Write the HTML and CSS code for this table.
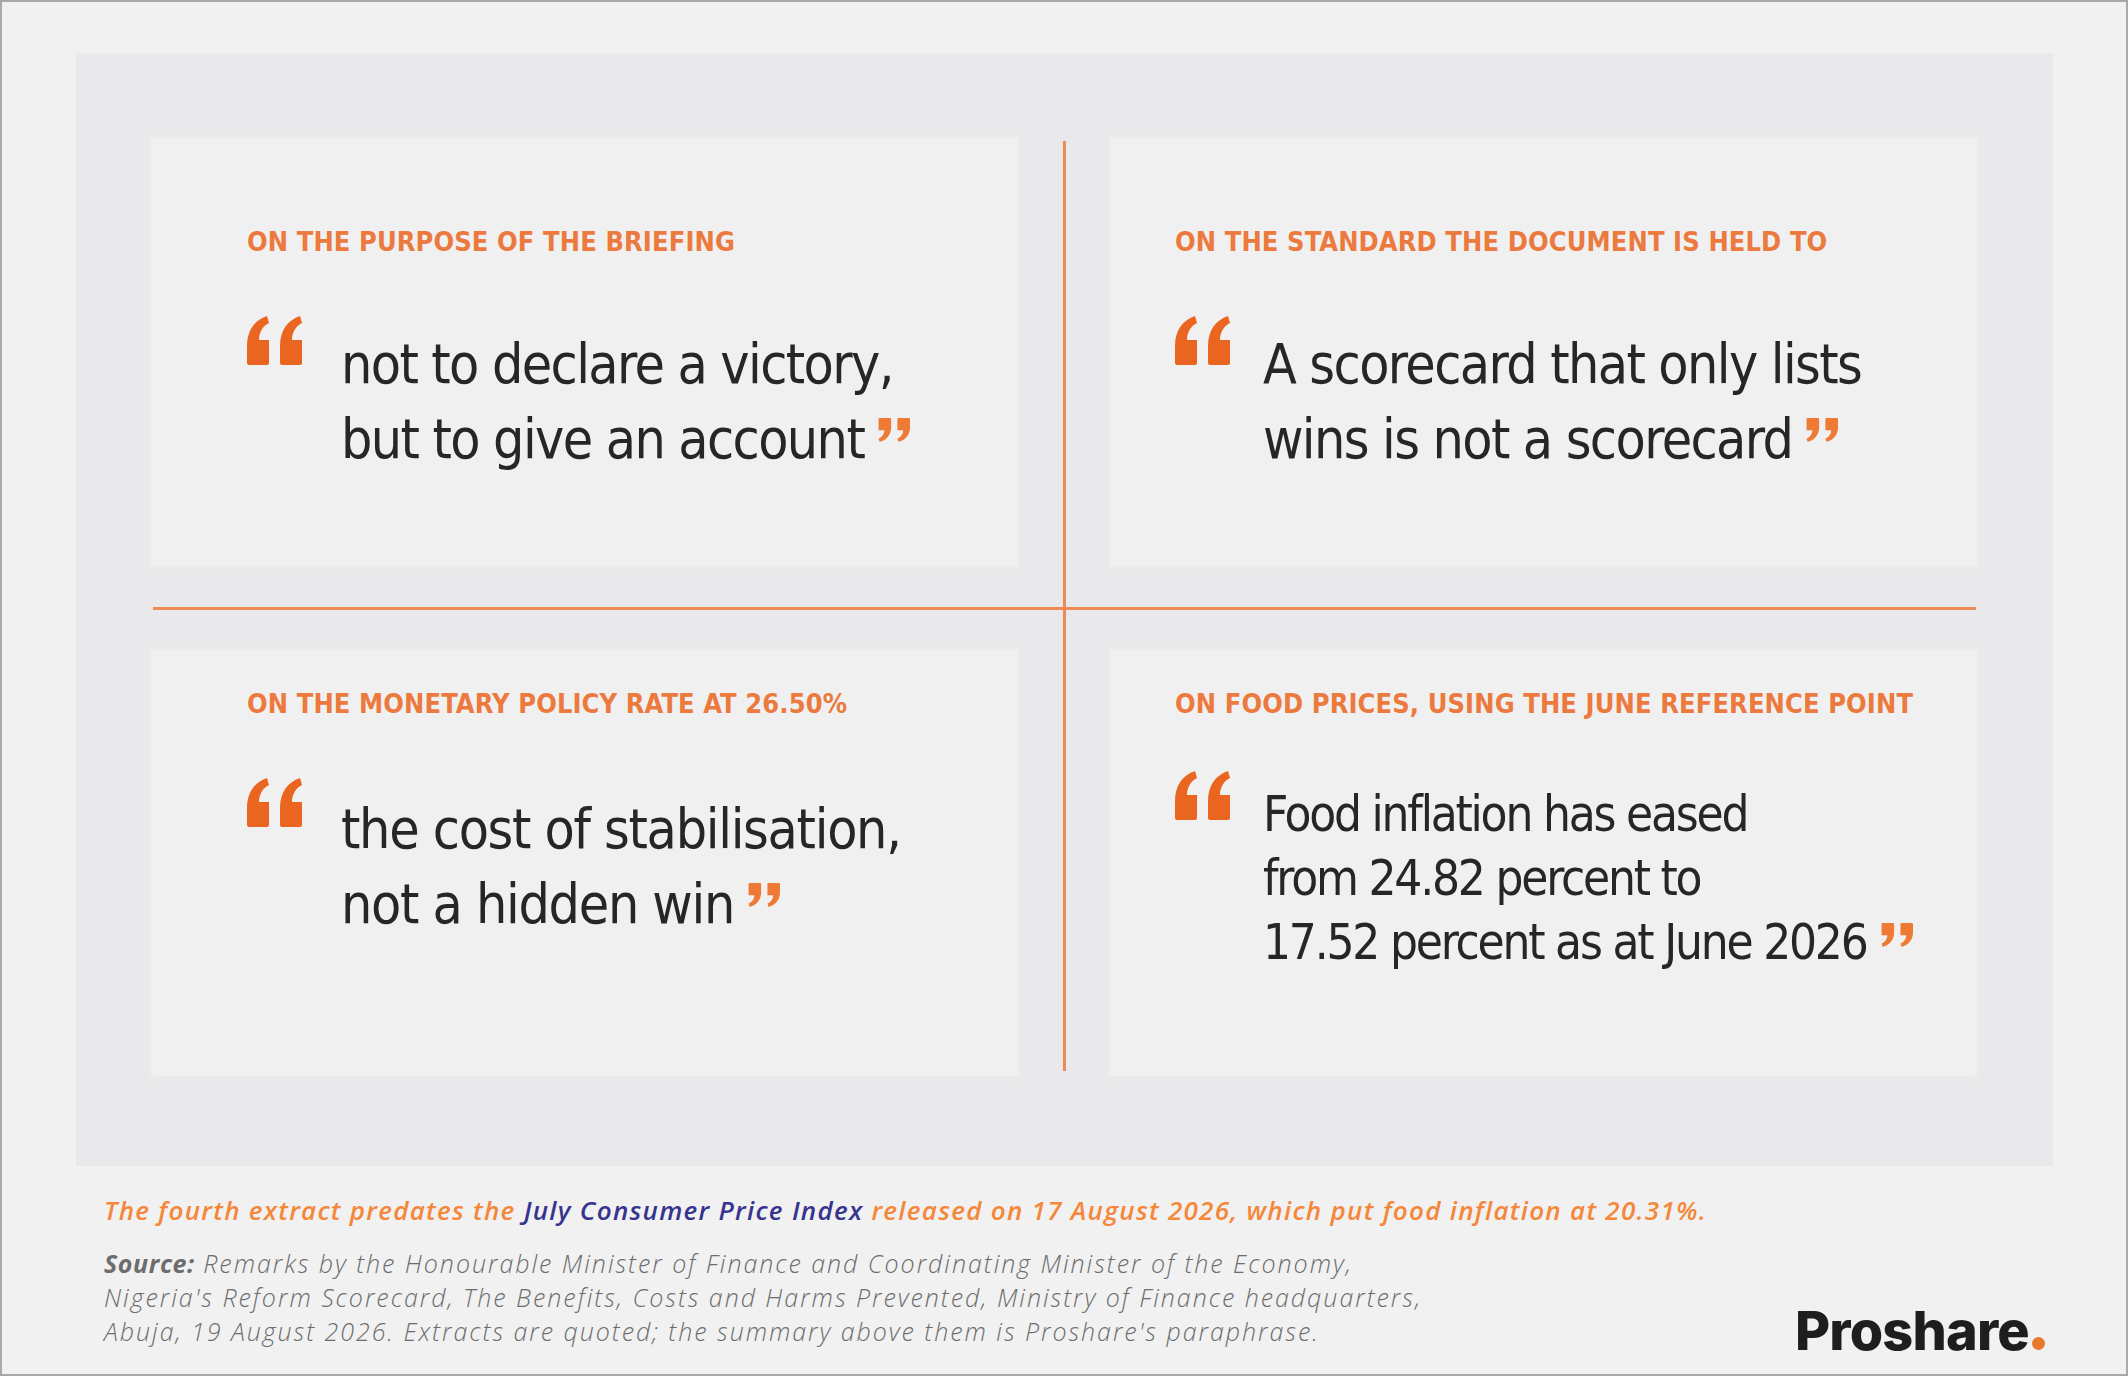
FILE: index.html
```html
<!DOCTYPE html>
<html lang="en">
<head>
<meta charset="utf-8">
<title>Proshare – Reform Scorecard extracts</title>
<link rel="stylesheet" href="styles.css">
</head>
<body>
<div class="frame">
  <section class="panel">
    <div class="grid">
      <article class="card card-tl col-left">
        <p class="label">ON THE PURPOSE OF THE BRIEFING</p>
        <div class="quote">
          <svg class="q-open" viewBox="0 0 56 49" aria-hidden="true"><path d="M2,49 L20,49 Q22,49 22,47 L22,24 L12,24 C12,16 16,10 22,7 L20,0 C8,4 0,14 0,30 L0,47 Q0,49 2,49 Z"/><path d="M35,49 L53,49 Q55,49 55,47 L55,24 L45,24 C45,16 49,10 55,7 L53,0 C41,4 33,14 33,30 L33,47 Q33,49 35,49 Z"/></svg>
          <p class="q-text">not to declare a victory,<br>but to give an account<svg class="q-close" viewBox="0 0 56 49" preserveAspectRatio="none" aria-hidden="true"><g transform="rotate(180 28 24.5)"><path d="M2,49 L20,49 Q22,49 22,47 L22,24 L12,24 C12,16 16,10 22,7 L20,0 C8,4 0,14 0,30 L0,47 Q0,49 2,49 Z"/><path d="M35,49 L53,49 Q55,49 55,47 L55,24 L45,24 C45,16 49,10 55,7 L53,0 C41,4 33,14 33,30 L33,47 Q33,49 35,49 Z"/></g></svg></p>
        </div>
      </article>
      <div class="rule-v"></div>
      <article class="card card-tr col-right">
        <p class="label">ON THE STANDARD THE DOCUMENT IS HELD TO</p>
        <div class="quote">
          <svg class="q-open" viewBox="0 0 56 49" aria-hidden="true"><path d="M2,49 L20,49 Q22,49 22,47 L22,24 L12,24 C12,16 16,10 22,7 L20,0 C8,4 0,14 0,30 L0,47 Q0,49 2,49 Z"/><path d="M35,49 L53,49 Q55,49 55,47 L55,24 L45,24 C45,16 49,10 55,7 L53,0 C41,4 33,14 33,30 L33,47 Q33,49 35,49 Z"/></svg>
          <p class="q-text">A scorecard that only lists<br>wins is not a scorecard<svg class="q-close" viewBox="0 0 56 49" preserveAspectRatio="none" aria-hidden="true"><g transform="rotate(180 28 24.5)"><path d="M2,49 L20,49 Q22,49 22,47 L22,24 L12,24 C12,16 16,10 22,7 L20,0 C8,4 0,14 0,30 L0,47 Q0,49 2,49 Z"/><path d="M35,49 L53,49 Q55,49 55,47 L55,24 L45,24 C45,16 49,10 55,7 L53,0 C41,4 33,14 33,30 L33,47 Q33,49 35,49 Z"/></g></svg></p>
        </div>
      </article>
      <div class="rule-h"></div>
      <article class="card card-bl col-left">
        <p class="label">ON THE MONETARY POLICY RATE AT 26.50%</p>
        <div class="quote">
          <svg class="q-open" viewBox="0 0 56 49" aria-hidden="true"><path d="M2,49 L20,49 Q22,49 22,47 L22,24 L12,24 C12,16 16,10 22,7 L20,0 C8,4 0,14 0,30 L0,47 Q0,49 2,49 Z"/><path d="M35,49 L53,49 Q55,49 55,47 L55,24 L45,24 C45,16 49,10 55,7 L53,0 C41,4 33,14 33,30 L33,47 Q33,49 35,49 Z"/></svg>
          <p class="q-text">the cost of stabilisation,<br>not a hidden win<svg class="q-close" viewBox="0 0 56 49" preserveAspectRatio="none" aria-hidden="true"><g transform="rotate(180 28 24.5)"><path d="M2,49 L20,49 Q22,49 22,47 L22,24 L12,24 C12,16 16,10 22,7 L20,0 C8,4 0,14 0,30 L0,47 Q0,49 2,49 Z"/><path d="M35,49 L53,49 Q55,49 55,47 L55,24 L45,24 C45,16 49,10 55,7 L53,0 C41,4 33,14 33,30 L33,47 Q33,49 35,49 Z"/></g></svg></p>
        </div>
      </article>
      <article class="card card-br col-right">
        <p class="label">ON FOOD PRICES, USING THE JUNE REFERENCE POINT</p>
        <div class="quote">
          <svg class="q-open" viewBox="0 0 56 49" aria-hidden="true"><path d="M2,49 L20,49 Q22,49 22,47 L22,24 L12,24 C12,16 16,10 22,7 L20,0 C8,4 0,14 0,30 L0,47 Q0,49 2,49 Z"/><path d="M35,49 L53,49 Q55,49 55,47 L55,24 L45,24 C45,16 49,10 55,7 L53,0 C41,4 33,14 33,30 L33,47 Q33,49 35,49 Z"/></svg>
          <p class="q-text">Food inflation has eased<br>from 24.82 percent to<br>17.52 percent as at June 2026<svg class="q-close" viewBox="0 0 56 49" preserveAspectRatio="none" aria-hidden="true"><g transform="rotate(180 28 24.5)"><path d="M2,49 L20,49 Q22,49 22,47 L22,24 L12,24 C12,16 16,10 22,7 L20,0 C8,4 0,14 0,30 L0,47 Q0,49 2,49 Z"/><path d="M35,49 L53,49 Q55,49 55,47 L55,24 L45,24 C45,16 49,10 55,7 L53,0 C41,4 33,14 33,30 L33,47 Q33,49 35,49 Z"/></g></svg></p>
        </div>
      </article>
    </div>
  </section>
  <footer class="footer">
    <p class="note">The fourth extract predates the <span class="hl">July Consumer Price Index</span> released on 17 August 2026, which put food inflation at 20.31%.</p>
    <div class="bottom">
      <p class="source"><b>Source:</b> Remarks by the Honourable Minister of Finance and Coordinating Minister of the Economy,<br>Nigeria's Reform Scorecard, The Benefits, Costs and Harms Prevented, Ministry of Finance headquarters,<br>Abuja, 19 August 2026. Extracts are quoted; the summary above them is Proshare's paraphrase.</p>
      <div class="logo">Proshare<span class="logo-dot"></span></div>
    </div>
  </footer>
</div>
</body>
</html>
```
FILE: styles.css
```css
html, body {
  margin: 0;
  padding: 0;
  background: #f1f1f1;
}

.frame {
  width: 2128px;
  height: 1376px;
  box-sizing: border-box;
  border: 2px solid #a9a9a9;
  background: #f1f1f1;
  padding: 51px 73px 0 74px;
  overflow: hidden;
}

.panel {
  height: 1113px;
  box-sizing: border-box;
  background: #e9e9eb;
  padding: 84px 0 0 75px;
}

.grid {
  display: grid;
  grid-template-columns: 867px 92px 867px;
  grid-template-rows: 430px 82px 427px;
}

.card {
  background: #f0f0f0;
  box-shadow: 0 0 6px 2px rgba(236, 236, 238, 0.9);
  font-family: "Liberation Sans Narrow", "DejaVu Sans Condensed", "Open Sans", sans-serif;
  font-stretch: condensed;
}

.card-tl { grid-column: 1; grid-row: 1; padding: 90px 0 0 96px; }
.card-tr { grid-column: 3; grid-row: 1; padding: 90px 0 0 65px; }
.card-bl { grid-column: 1; grid-row: 3; padding: 40px 0 0 96px; }
.card-br { grid-column: 3; grid-row: 3; padding: 40px 0 0 65px; }

.rule-v {
  grid-column: 2;
  grid-row: 1 / 4;
  justify-self: center;
  width: 3px;
  margin: 4px 0 5px;
  background: #f08a55;
}

.rule-h {
  grid-column: 1 / 4;
  grid-row: 2;
  align-self: center;
  height: 3px;
  margin: 0 1px 0 2px;
  background: #f08a55;
}

.label {
  margin: 0;
  font-size: 27px;
  line-height: 29px;
  font-weight: 700;
  color: #ec7a3e;
  letter-spacing: 0.1px;
  white-space: nowrap;
}

.quote {
  display: flex;
  align-items: flex-start;
  margin-top: 60px;
}

.card-br .quote { margin-top: 53px; }

.q-open {
  flex: none;
  width: 56px;
  height: 49px;
  fill: #ea6520;
}

.q-text {
  margin: 11px 0 0 38px;
  font-size: 55px;
  line-height: 75px;
  letter-spacing: -1.6px;
  color: #262626;
  white-space: nowrap;
}

.col-right .q-text { margin-left: 32px; }
.card-bl .q-text { margin-top: 14px; letter-spacing: -1.3px; }

.card-br .q-text {
  margin-top: 12px;
  font-size: 49px;
  line-height: 64px;
  letter-spacing: -2.2px;
}

.q-close {
  width: 32px;
  height: 24px;
  margin-left: 14px;
  vertical-align: 16px;
  fill: #ee7a36;
}

.card-br .q-close { vertical-align: 12px; }

.footer {
  padding: 0 8px 0 28px;
  font-family: "Open Sans", "Liberation Sans", sans-serif;
}

.note {
  margin: 27px 0 0;
  font-size: 26px;
  line-height: 34px;
  font-style: italic;
  font-weight: 600;
  letter-spacing: 1.28px;
  color: #f5873a;
  white-space: nowrap;
}

.hl { color: #36348f; }

.bottom {
  display: flex;
  justify-content: space-between;
  align-items: flex-end;
  margin-top: 19px;
}

.source {
  margin: 0;
  font-size: 25px;
  line-height: 34px;
  font-style: italic;
  font-weight: 300;
  letter-spacing: 1.95px;
  color: #6d6d6d;
  white-space: nowrap;
}

.source b { font-weight: 700; letter-spacing: 0.6px; }

.logo {
  font-family: "Inter", "Liberation Sans", sans-serif;
  font-weight: 800;
  font-size: 54px;
  line-height: 54px;
  letter-spacing: -0.8px;
  color: #1e1e1e;
  margin-bottom: -10px;
}

.logo-dot {
  display: inline-block;
  width: 13px;
  height: 13px;
  margin-left: 3px;
  border-radius: 50%;
  background: #e9782a;
}
```
